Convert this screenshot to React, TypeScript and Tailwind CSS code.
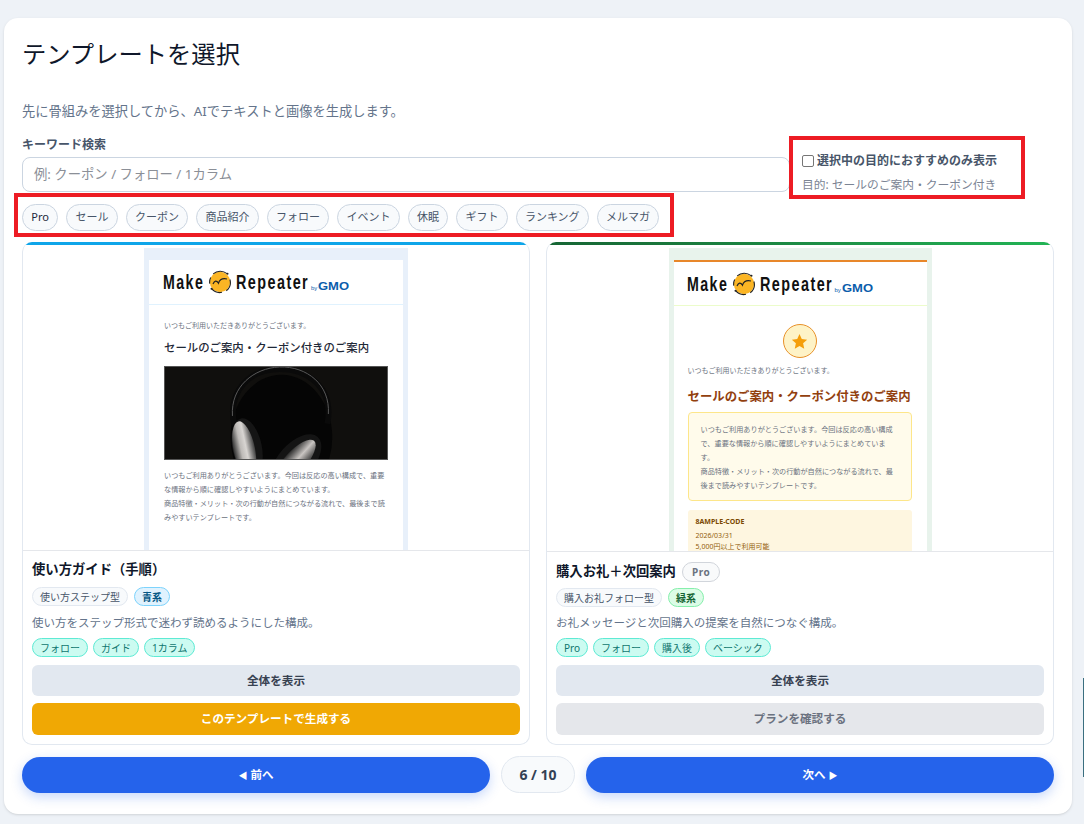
const Logo = () => (
  <div className="flex items-center font-['Liberation_Sans'] font-bold text-[#111] leading-none">
    <span className="text-[20px] w-[43px] inline-block origin-left scale-x-[0.71] tracking-[2px]">Make</span>
    <svg viewBox="0 0 24 24" className="w-[24px] h-[24px] ml-[2px] mr-[4px]">
      <circle cx="12" cy="12" r="10.2" fill="#fbb524" />
      <path d="M5.2 3.900A10.600 10.600 0 0 1 19 3.600M21.900 9.500a10.400 10.400 0 0 1-3.600 11.200M14 22.300A10.500 10.500 0 0 1 3.500 18.400M1.700 13.600a10.500 10.500 0 0 1 1-6" fill="none" stroke="#222" strokeWidth="1.1" />
      <path d="M5 14c1.500-3.500 3.500-4 5.500-.8C11.500 9.800 14 8 19 9" fill="none" stroke="#222" strokeWidth="1.2" />
      <circle cx="19.500" cy="3.800" r="1" fill="#222" />
      <circle cx="3.500" cy="18.800" r="1" fill="#222" />
    </svg>
    <span className="text-[20px] w-[74px] inline-block origin-left scale-x-[0.72] tracking-[2px]">Repeater</span>
    <span className="text-[6px] font-normal text-[#0b5cab] self-end mb-[3px] ml-[1px] mr-[1px]">by</span>
    <span className="text-[10px] w-[31px] inline-block origin-left scale-x-[1.3] font-bold text-[#0b5cab] self-end mb-[2px]">GMO</span>
  </div>
)

const Headphones = () => (
  <svg viewBox="0 0 225 94" className="w-full h-[94px] block bg-[#100f0d] border border-[#555]">
    <defs>
      <linearGradient id="cupA" x1="0" y1="0" x2="1" y2="0">
        <stop offset="0" stopColor="#2e2e2e" />
        <stop offset="0.35" stopColor="#bdbab7" />
        <stop offset="0.6" stopColor="#d8d5d2" />
        <stop offset="1" stopColor="#3c3c3c" />
      </linearGradient>
      <linearGradient id="cupB" x1="0" y1="0" x2="1" y2="0">
        <stop offset="0" stopColor="#2b2b2b" />
        <stop offset="0.5" stopColor="#c9c5c2" />
        <stop offset="1" stopColor="#333" />
      </linearGradient>
    </defs>
    <ellipse cx="118" cy="72" rx="52" ry="64" fill="#050505" />
    <path d="M70 60C62 22 88 2 116 2c30 0 56 20 49 56" fill="none" stroke="#0a0a0a" strokeWidth="6" />
    <path d="M68 50C66 20 90 1 116 0c28-1 52 18 50 48" fill="none" stroke="#5a5a5a" strokeWidth="1" />
    <ellipse cx="83" cy="82" rx="15" ry="30" transform="rotate(-12 83 82)" fill="#151515" />
    <ellipse cx="80" cy="84" rx="11" ry="29" transform="rotate(-12 80 84)" fill="url(#cupA)" />
    <ellipse cx="133" cy="96" rx="18" ry="33" transform="rotate(42 133 96)" fill="#141414" />
    <ellipse cx="132" cy="97" rx="11" ry="29" transform="rotate(42 132 97)" fill="url(#cupB)" />
  </svg>
)

const Tag = ({ children, tone }: { children: React.ReactNode; tone: string }) => (
  <span className={`inline-flex items-center h-[19px] px-[7px] rounded-full border text-[10px] leading-none ${tone}`}>{children}</span>
)

const mint = "bg-[#ccfbf1] border-[#5eead4] text-[#0f766e]"
const plain = "bg-[#f8fafc] border-[#e2e8f0] text-[#475569]"

export default function App() {
  return (
    <div className="relative w-[1084px] h-[824px] overflow-hidden bg-[#eef2f7] pt-[18px] px-[4px] font-['Noto_Sans','Noto_Sans_CJK_JP',sans-serif]">
      <div className="w-[1068px] h-[796px] bg-white rounded-[14px] px-[18px] pt-[18px] shadow-sm">
        <h1 className="text-[24.3px] leading-[36px] text-[#0f172a] font-normal">テンプレートを選択</h1>
        <p className="mt-[29px] text-[13.25px] leading-[20px] text-[#64748b]">先に骨組みを選択してから、AIでテキストと画像を生成します。</p>

        <div className="flex mt-[15px] h-[56px]">
          <div className="w-[768px]">
            <div className="text-[12px] leading-[18px] font-bold text-[#475569]">キーワード検索</div>
            <div className="mt-[3px] h-[35px] border border-[#cbd5e1] rounded-[8px] flex items-center px-[11px] text-[13.33px] text-[#8b8f97]">例: クーポン / フォロー / 1カラム</div>
          </div>
          <div className="ml-[12px] pt-[16px]">
            <div className="flex items-center gap-[3px] text-[12px] leading-[18px] font-bold text-[#475569]">
              <span className="w-[12px] h-[12px] rounded-[2px] border border-[#767676] bg-white"></span>
              選択中の目的におすすめのみ表示
            </div>
            <div className="mt-[5px] text-[11.75px] leading-[18px] text-[#7b8494]">目的: セールのご案内・クーポン付き</div>
          </div>
        </div>

        <div className="flex gap-[8px] mt-[12px]">
          {["Pro", "セール", "クーポン", "商品紹介", "フォロー", "イベント", "休眠", "ギフト", "ランキング", "メルマガ"].map((c, i) => (
            <span key={c} className={`h-[27px] inline-flex items-center px-[8.25px] rounded-full border border-[#cbd5e1] bg-[#f8fafc] text-[11px] ${i === 0 ? "text-[#1e293b]" : "text-[#475569]"}`}>{c}</span>
          ))}
        </div>

        <div className="grid grid-cols-2 gap-[16px] mt-[11px] w-[1032px]">
          {/* left card */}
          <div className="h-[503px] border border-[#e2e8f0] border-t-0 rounded-[10px] overflow-hidden flex flex-col">
            <div className="h-[3px] bg-[#0ea5e9] shrink-0"></div>
            <div className="h-[306px] shrink-0 overflow-hidden flex justify-center border-b border-[#e5e7eb]">
              <div className="w-[264px] h-full mt-[3px] bg-[#e8f0fa] px-[5px] pt-[12px]">
                <div className="bg-white h-full">
                  <div className="h-[45px] px-[14px] flex items-center border-b border-[#e0f2fe]"><Logo /></div>
                  <div className="px-[15px] pt-[15px]">
                    <div className="text-[7px] leading-[12px] text-[#6b7280]">いつもご利用いただきありがとうございます。</div>
                    <div className="mt-[7px] text-[11.4px] leading-[18px] font-medium text-[#1f2937] whitespace-nowrap">セールのご案内・クーポン付きのご案内</div>
                    <div className="mt-[9px]"><Headphones /></div>
                    <div className="mt-[8px] text-[7.15px] leading-[14px] text-[#6b7280]">いつもご利用ありがとうございます。今回は反応の高い構成で、重要な情報から順に確認しやすいようにまとめています。<br />商品特徴・メリット・次の行動が自然につながる流れで、最後まで読みやすいテンプレートです。</div>
                  </div>
                </div>
              </div>
            </div>
            <div className="px-[9px] pt-[9px]">
              <div className="h-[20px] flex items-center text-[13.33px] font-bold text-[#0f172a]">使い方ガイド（手順）</div>
              <div className="flex gap-[6px] mt-[7px]">
                <Tag tone={plain}>使い方ステップ型</Tag>
                <Tag tone="bg-[#e0f2fe] border-[#7dd3fc] text-[#075985] font-bold">青系</Tag>
              </div>
              <div className="mt-[8px] text-[11.5px] leading-[18px] text-[#64748b]">使い方をステップ形式で迷わず読めるようにした構成。</div>
              <div className="flex gap-[5px] mt-[6px]">
                <Tag tone={mint}>フォロー</Tag>
                <Tag tone={mint}>ガイド</Tag>
                <Tag tone={mint}>1カラム</Tag>
              </div>
              <div className="mt-[8px] h-[31px] rounded-[6px] bg-[#e2e8f0] flex items-center justify-center text-[11.6px] font-bold text-[#374151]">全体を表示</div>
              <div className="mt-[7px] h-[32px] rounded-[6px] bg-[#f0a804] flex items-center justify-center text-[11.6px] font-bold text-white">このテンプレートで生成する</div>
            </div>
          </div>

          {/* right card */}
          <div className="h-[503px] border border-[#e2e8f0] border-t-0 rounded-[10px] overflow-hidden flex flex-col">
            <div className="h-[3px] bg-gradient-to-r from-[#166534] to-[#22b455] shrink-0"></div>
            <div className="h-[307px] shrink-0 overflow-hidden flex justify-center border-b border-[#e5e7eb]">
              <div className="w-[263px] h-full mt-[3px] bg-[#e8f3ec] px-[5px] pt-[12px]">
                <div className="bg-white h-full border-t-[2px] border-[#e8872a]">
                  <div className="h-[44px] px-[13px] flex items-center border-b border-[#ecfccb]"><Logo /></div>
                  <div className="pl-[14px] pr-[15px]">
                    <div className="mt-[18px] mx-auto w-[34px] h-[34px] rounded-full bg-[#fef3c7] border border-[#e8912a] flex items-center justify-center">
                      <svg viewBox="0 0 24 24" className="w-[17px] h-[17px]"><path d="M12 1.500l3.200 7.100 7.600.8-5.700 5.100 1.600 7.600L12 18.200l-6.700 3.900 1.600-7.600L1.200 9.400l7.600-.8z" fill="#f59e0b" /></svg>
                    </div>
                    <div className="mt-[7px] text-[7px] leading-[12px] text-[#6b7280]">いつもご利用いただきありがとうございます。</div>
                    <div className="mt-[11px] text-[12.4px] leading-[18px] font-bold text-[#92400e] whitespace-nowrap">セールのご案内・クーポン付きのご案内</div>
                    <div className="mt-[6px] h-[89px] rounded-[4px] bg-[#fffbeb] border border-[#fde68a] pl-[12px] pr-[16px] pt-[9px] text-[7.15px] leading-[14px] text-[#6b7280]">いつもご利用ありがとうございます。今回は反応の高い構成で、重要な情報から順に確認しやすいようにまとめています。<br />商品特徴・メリット・次の行動が自然につながる流れで、最後まで読みやすいテンプレートです。</div>
                    <div className="mt-[9px] h-[60px] rounded-[3px] bg-[#fef6e0] px-[8px] pt-[6px] text-[#92600e]">
                      <div className="text-[7px] leading-[12px] font-bold text-[#7c4a03]">8AMPLE-CODE</div>
                      <div className="mt-[2px] text-[7px] leading-[11px]">2026/03/31</div>
                      <div className="text-[7px] leading-[11px]">5,000円以上で利用可能</div>
                    </div>
                  </div>
                </div>
              </div>
            </div>
            <div className="px-[9px] pt-[10px]">
              <div className="h-[20px] flex items-center gap-[6px] text-[13.33px] font-bold text-[#0f172a]">
                購入お礼＋次回案内
                <span className="h-[20px] px-[9px] rounded-full border border-[#d1d5db] bg-[#f9fafb] inline-flex items-center text-[10px] font-bold tracking-[0.5px] text-[#6b7280]">Pro</span>
              </div>
              <div className="flex gap-[6px] mt-[6px]">
                <Tag tone={plain}>購入お礼フォロー型</Tag>
                <Tag tone="bg-[#dcfce7] border-[#86efac] text-[#166534] font-bold">緑系</Tag>
              </div>
              <div className="mt-[7px] text-[11.5px] leading-[18px] text-[#64748b]">お礼メッセージと次回購入の提案を自然につなぐ構成。</div>
              <div className="flex gap-[5px] mt-[6px]">
                <Tag tone={mint}>Pro</Tag>
                <Tag tone={mint}>フォロー</Tag>
                <Tag tone={mint}>購入後</Tag>
                <Tag tone={mint}>ベーシック</Tag>
              </div>
              <div className="mt-[8px] h-[31px] rounded-[6px] bg-[#e2e8f0] flex items-center justify-center text-[11.6px] font-bold text-[#374151]">全体を表示</div>
              <div className="mt-[7px] h-[32px] rounded-[6px] bg-[#e5e7eb] flex items-center justify-center text-[11.6px] font-bold text-[#6b7280]">プランを確認する</div>
            </div>
          </div>
        </div>

        <div className="flex items-center gap-[11px] mt-[11px] w-[1032px]">
          <button className="flex-1 h-[36px] rounded-full bg-[#2563eb] text-white text-[11.5px] font-bold shadow-[0_4px_12px_rgba(37,99,235,0.25)]"><span className="text-[9px]">◀</span> 前へ</button>
          <span className="w-[74px] h-[37px] rounded-full border border-[#e2e8f0] bg-[#f8fafc] flex items-center justify-center text-[14px] font-bold text-[#334155]">6 / 10</span>
          <button className="flex-1 h-[36px] rounded-full bg-[#2563eb] text-white text-[11.5px] font-bold shadow-[0_4px_12px_rgba(37,99,235,0.25)]">次へ <span className="text-[9px]">▶</span></button>
        </div>
      </div>

      {/* annotation boxes */}
      <div className="absolute left-[14px] top-[193px] w-[660px] h-[44px] border-[4px] border-[#ed1c24]"></div>
      <div className="absolute left-[789px] top-[136px] w-[236px] h-[63px] border-[4px] border-[#ed1c24]"></div>
      <div className="absolute right-0 top-[678px] w-[1px] h-[99px] bg-[#3b6f80]"></div>
    </div>
  )
}
